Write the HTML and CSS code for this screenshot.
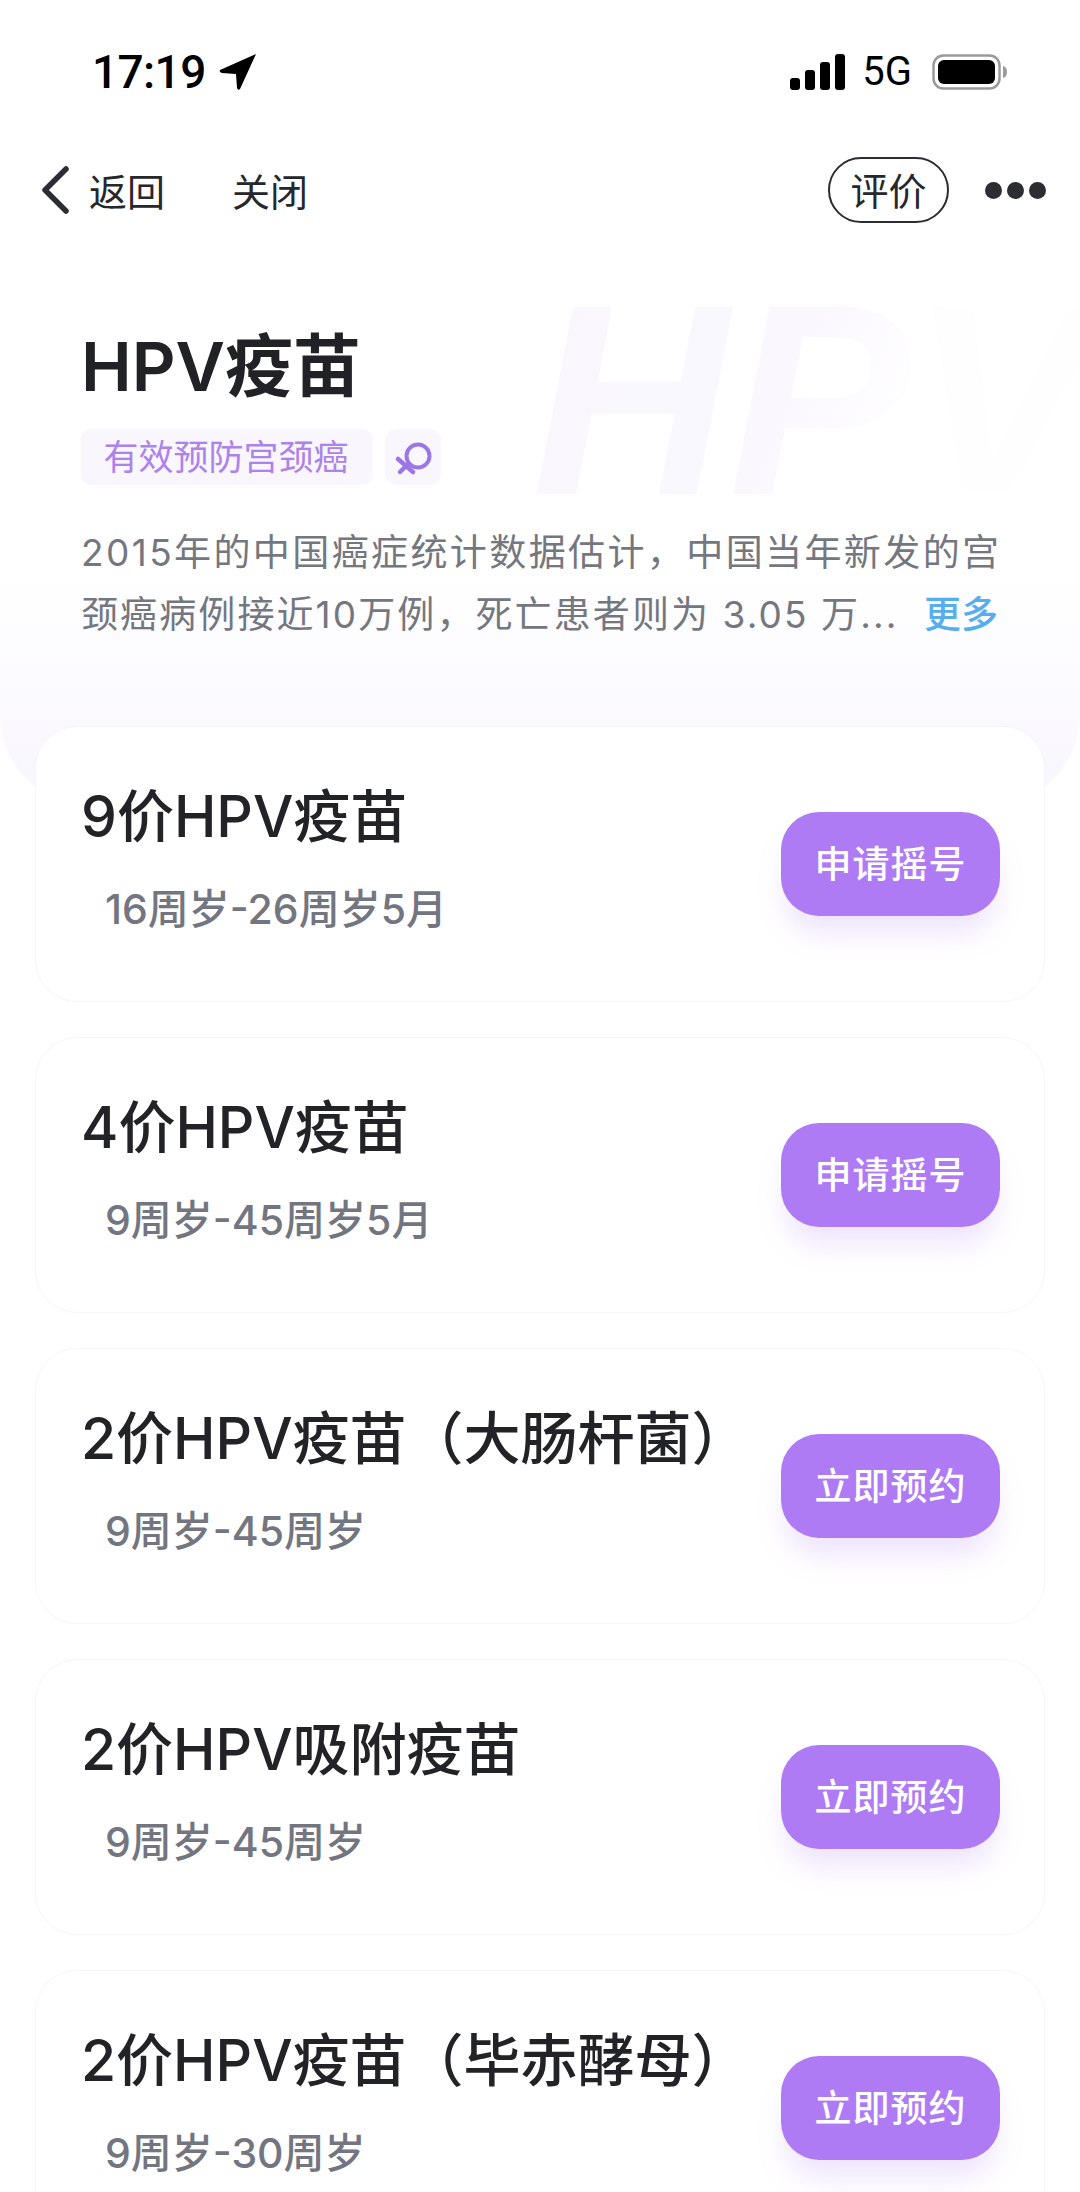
FILE: index.html
```html
<!DOCTYPE html>
<html lang="zh-CN">
<head>
<meta charset="utf-8">
<title>HPV疫苗</title>
<link rel="stylesheet" href="styles.css">
</head>
<body>
<div class="page">
  <div class="hero-bg"></div>
  <div class="watermark">HPV</div>
  <div class="content">
    <div class="status">
      <div class="status-left">
        <span class="time">17:19</span>
        <svg class="loc" viewBox="0 0 38 38"><path d="M37 1 L1 17 Q0 19 3 20 L17 21 L18 35 Q19 38 21 36 Z" fill="#000"/></svg>
      </div>
      <div class="status-right">
        <svg class="signal" viewBox="0 0 56 36"><rect x="0" y="24" width="10" height="12" rx="3"/><rect x="15" y="16" width="10" height="20" rx="3"/><rect x="30" y="8" width="10" height="28" rx="3"/><rect x="45" y="0" width="10" height="36" rx="3"/></svg>
        <span class="net">5G</span>
        <svg class="battery" viewBox="0 0 76 36"><rect x="1.5" y="1.5" width="66" height="33" rx="10" fill="none" stroke="#9a9a9a" stroke-width="2.5"/><rect x="6" y="6" width="57" height="24" rx="6" fill="#000"/><path d="M71 12 q4 1 4 6 q0 5 -4 6 z" fill="#9a9a9a"/></svg>
      </div>
    </div>
    <nav class="nav">
      <div class="nav-left">
        <svg class="back" viewBox="0 0 28 48"><path d="M25 3 L4 24 L25 45" fill="none" stroke="#2b2d33" stroke-width="5.5" stroke-linecap="round" stroke-linejoin="round"/></svg>
        <span class="nav-back">返回</span>
        <span class="nav-close">关闭</span>
      </div>
      <div class="nav-right">
        <span class="rate">评价</span>
        <span class="dots"><i></i><i></i><i></i></span>
      </div>
    </nav>
    <header class="hero">
      <h1 class="title">HPV疫苗</h1>
      <div class="tags">
        <span class="tag">有效预防宫颈癌</span>
        <span class="tag-icon">
          <svg viewBox="0 0 56 56" class="female"><circle cx="33" cy="27" r="11.5" fill="none" stroke="#9b77e6" stroke-width="4"/><path d="M13 30 L28 43 M15 43 L23 35" fill="none" stroke="#9b77e6" stroke-width="4.5" stroke-linecap="round"/></svg>
        </span>
      </div>
      <p class="desc">2015年的中国癌症统计数据估计，中国当年新发的宫</p>
      <p class="desc desc-last"><span>颈癌病例接近10万例，死亡患者则为 3.05 万...</span><a class="more">更多</a></p>
    </header>
    <main class="list">
      <section class="card">
        <div class="info"><h2 class="name">9价HPV疫苗</h2><p class="age">16周岁-26周岁5月</p></div>
        <button class="btn">申请摇号</button>
      </section>
      <section class="card">
        <div class="info"><h2 class="name">4价HPV疫苗</h2><p class="age">9周岁-45周岁5月</p></div>
        <button class="btn">申请摇号</button>
      </section>
      <section class="card">
        <div class="info"><h2 class="name">2价HPV疫苗（大肠杆菌）</h2><p class="age">9周岁-45周岁</p></div>
        <button class="btn">立即预约</button>
      </section>
      <section class="card">
        <div class="info"><h2 class="name">2价HPV吸附疫苗</h2><p class="age">9周岁-45周岁</p></div>
        <button class="btn">立即预约</button>
      </section>
      <section class="card">
        <div class="info"><h2 class="name">2价HPV疫苗（毕赤酵母）</h2><p class="age">9周岁-30周岁</p></div>
        <button class="btn">立即预约</button>
      </section>
    </main>
  </div>
</div>
</body>
</html>
```
FILE: styles.css
```css
* { box-sizing: border-box; }
html, body { margin: 0; padding: 0; background: #fff; }
body { font-family: Inter, "Noto Sans CJK SC", sans-serif; color: #222326; }
.page { position: relative; width: 1080px; height: 2192px; overflow: hidden; background: #fff; }
.hero-bg {
  position: absolute; left: 0; top: 560px; width: 1080px; height: 245px;
  border-radius: 0 0 90px 90px;
  background: linear-gradient(#ffffff 0%, #fcfbff 45%, #f8f6fe 100%);
}
.watermark {
  position: absolute; left: 532px; top: 250px;
  font: italic 700 272px/300px "Liberation Sans", sans-serif;
  white-space: nowrap;
  color: transparent;
  background: linear-gradient(112deg, #f9f6fe 0%, #faf8fe 46%, #fefdff 64%, #fefdff 100%);
  -webkit-background-clip: text; background-clip: text;
}
.content { position: relative; }

.status { height: 142px; padding: 53px 72px 0 92px; display: flex; justify-content: space-between; align-items: flex-start; }
.status-left { display: flex; align-items: center; gap: 13px; height: 38px; }
.time { font-family: Roboto, sans-serif; font-size: 46px; font-weight: 500; line-height: 38px; letter-spacing: -.6px; color: #000; }
.loc { width: 38px; height: 38px; }
.status-right { display: flex; align-items: center; height: 36px; margin-top: 1px; }
.signal { width: 56px; height: 36px; fill: #000; }
.net { font-family: Roboto, sans-serif; font-size: 40px; line-height: 36px; margin-left: 16px; color: #000; }
.battery { width: 76px; height: 36px; margin-left: 20px; }

.nav { height: 96px; padding: 0 34px 0 41px; display: flex; justify-content: space-between; align-items: center; }
.nav-left { display: flex; align-items: center; }
.back { width: 28px; height: 48px; }
.nav-back, .nav-close { font-size: 38px; line-height: 48px; color: #26272b; padding-top: 3px; }
.nav-back { margin-left: 20px; }
.nav-close { margin-left: 67px; }
.nav-right { display: flex; align-items: center; }
.rate { width: 121px; height: 66px; border: 2px solid #2b2d33; border-radius: 33px; font-size: 38px; line-height: 62px; text-align: center; color: #26272b; padding-top: 1px; }
.dots { display: flex; gap: 5px; margin-left: 36px; }
.dots i { width: 17px; height: 17px; border-radius: 50%; background: #2b2d33; }

.hero { padding: 82px 82px 0 81px; height: 488px; }
.title { margin: 0; font-size: 68px; line-height: 93px; font-weight: 600; color: #212226; }
.tags { display: flex; gap: 12px; margin-top: 16px; }
.tag { width: 292px; height: 56px; padding-right: 2px; border-radius: 10px; background: #f9f6fe; color: #ab83ea; font-size: 35px; line-height: 56px; text-align: center; }
.tag-icon { width: 56px; height: 56px; border-radius: 12px; background: #f9f6fe; display: flex; }
.female { width: 56px; height: 56px; }
.desc { margin: 0; font-size: 37px; line-height: 62px; color: #75777f; white-space: nowrap; letter-spacing: 2.4px; }
.tags + .desc { margin-top: 37px; }
.desc-last { display: flex; justify-content: space-between; letter-spacing: 2.1px; }
.more { color: #56aeee; letter-spacing: 0; font-weight: 500; }

.list { padding: 0 35px; display: flex; flex-direction: column; gap: 35px; }
.card { flex: none; height: 276px; border: 1px solid #f6f5f8; border-radius: 42px; background: #fff; padding: 54px 44px 0 46px; display: flex; justify-content: space-between; align-items: flex-start; }
.name { margin: 0 0 0 -1px; font-size: 57px; line-height: 72px; font-weight: 500; color: #222326; white-space: nowrap; }
.age { margin: 28px 0 0; padding-left: 23px; font-size: 41px; line-height: 56px; font-weight: 500; color: #737680; }
.btn { flex: none; margin-top: 31px; width: 219px; height: 104px; border: 0; border-radius: 38px; background: #ae7bf5; color: #fff; font-family: inherit; font-size: 37px; font-weight: 500; letter-spacing: 1px; padding: 0 0 5px; box-shadow: 0 22px 30px -6px rgba(174,123,245,.22); }
```
